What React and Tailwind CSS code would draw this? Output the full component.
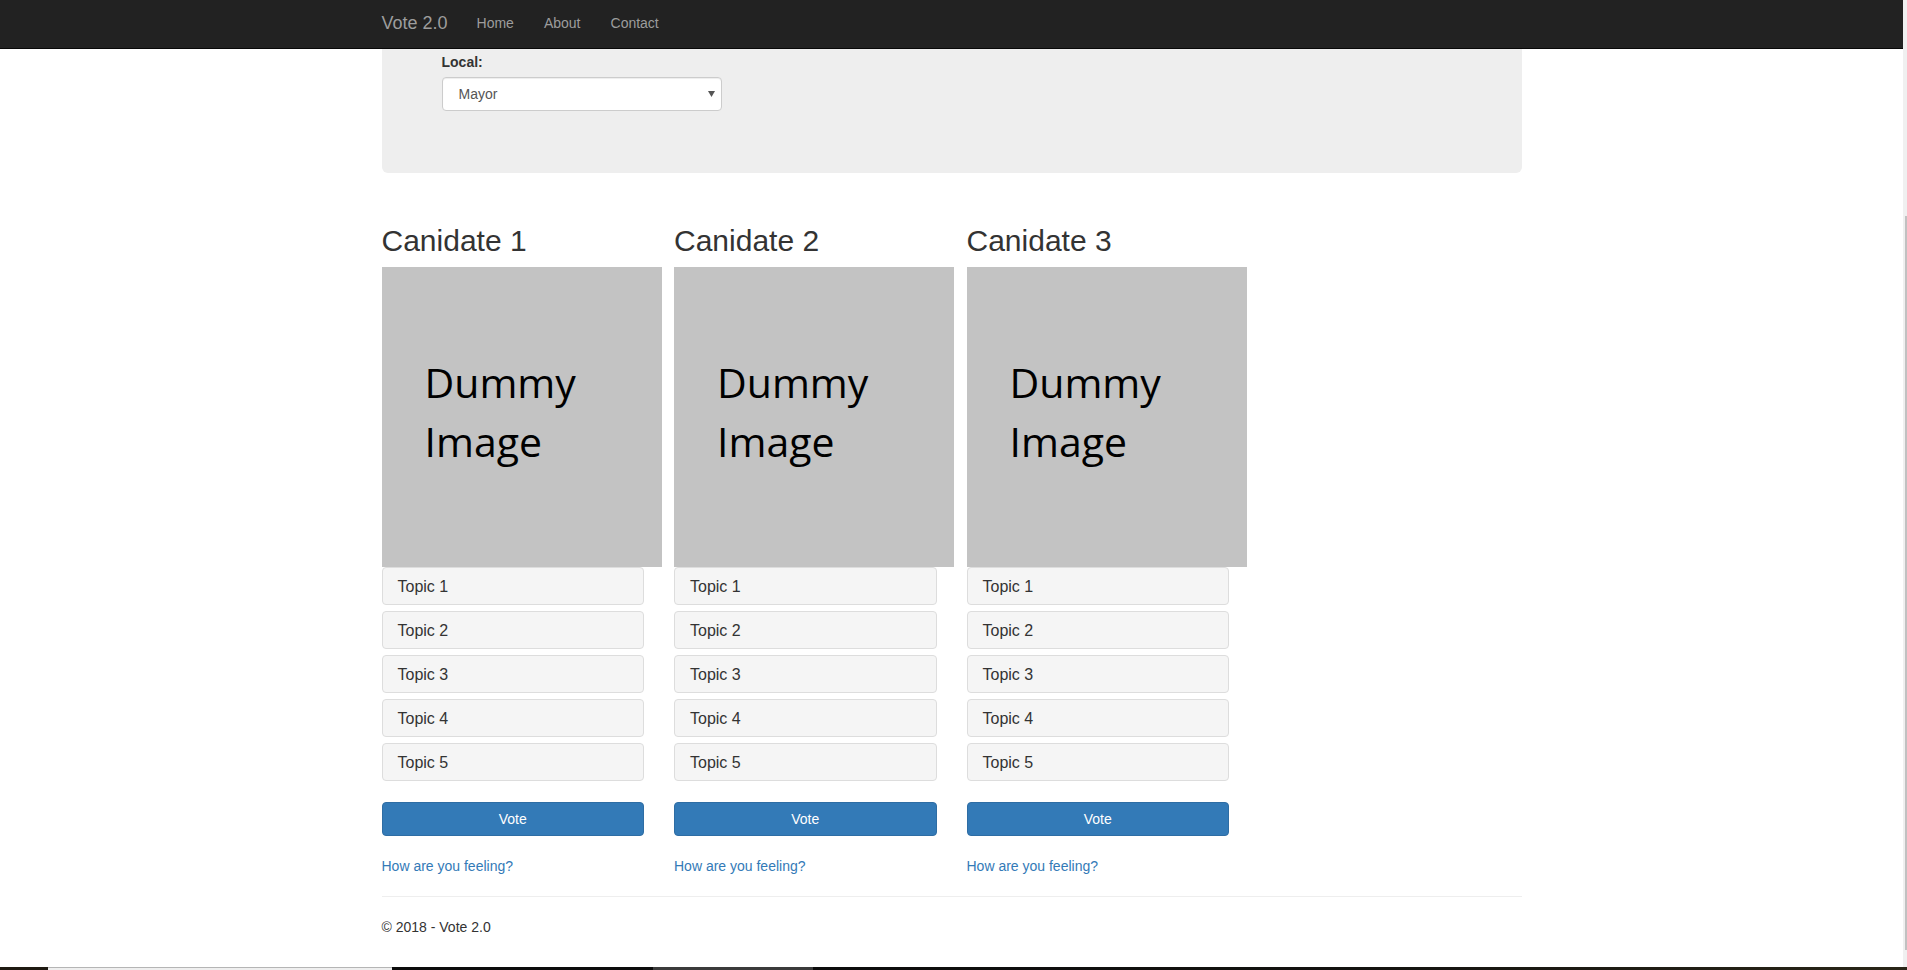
import React from "react";

const candidates = [1, 2, 3];
const topics = [1, 2, 3, 4, 5];

function Column({ n }) {
  return (
    <div className="w-[262.5px] shrink-0 flex flex-col">
      <h2 className="text-[30px] leading-[33px] text-[#333] font-normal">Canidate {n}</h2>
      <div
        className="mt-[10px] w-[280px] h-[300px] shrink-0 bg-[#c3c3c3] pt-[86px] pl-[43px] text-black text-[41px] leading-[59px]"
        style={{ fontFamily: '"Open Sans", sans-serif' }}
      >
        <div>Dummy</div>
        <div>Image</div>
      </div>
      <div className="flex flex-col gap-[6px]">
        {topics.map((t) => (
          <div
            key={t}
            className="h-[38px] flex items-center px-[15px] pt-[2px] bg-[#f5f5f5] border border-[#ddd] rounded-[4px] text-[16px] text-[#333]"
          >
            Topic {t}
          </div>
        ))}
      </div>
      <button className="mt-[21px] h-[34px] w-full bg-[#337ab7] border border-[#2e6da4] rounded-[4px] text-white text-[14px]">
        Vote
      </button>
      <a className="mt-[20px] text-[14px] leading-[20px] text-[#337ab7]">How are you feeling?</a>
    </div>
  );
}

export default function App() {
  return (
    <div
      className="w-[1907px] h-[970px] flex flex-col overflow-hidden bg-white"
      style={{ fontFamily: '"Liberation Sans", Arial, sans-serif' }}
    >
      <div className="h-[967px] flex flex-row">
        <div className="flex-1 flex flex-col">
          {/* Navbar */}
          <div className="h-[49px] shrink-0 bg-[#222] border-b border-[#080808] flex justify-center">
            <div className="w-[1140px] flex items-center h-[46px]">
              <span className="text-[18px] text-[#9d9d9d]">Vote 2.0</span>
              <span className="ml-[29px] text-[14px] text-[#9d9d9d]">Home</span>
              <span className="ml-[30px] text-[14px] text-[#9d9d9d]">About</span>
              <span className="ml-[30px] text-[14px] text-[#9d9d9d]">Contact</span>
            </div>
          </div>
          {/* Content */}
          <div className="flex justify-center">
            <div className="w-[1140px] flex flex-col">
              <div className="h-[124px] bg-[#eee] rounded-b-[6px] pl-[60px] pt-[3px]">
                <div className="text-[14px] leading-[20px] font-bold text-[#333]">Local:</div>
                <div className="mt-[5px] w-[280px] h-[34px] bg-white border border-[#ccc] rounded-[4px] shadow-[inset_0_1px_1px_rgba(0,0,0,0.075)] flex items-center justify-between pl-[16px] pr-[6px]">
                  <span className="text-[14px] text-[#555]">Mayor</span>
                  <svg width="7" height="6" viewBox="0 0 7 6">
                    <path d="M0 0 L7 0 L3.5 6 Z" fill="#555" />
                  </svg>
                </div>
              </div>
              <div className="mt-[51px] flex flex-row gap-[30px]">
                {candidates.map((n) => (
                  <Column key={n} n={n} />
                ))}
              </div>
              <div className="mt-[20px] border-t border-[#eee]" />
              <div className="mt-[20px] text-[14px] leading-[20px] text-[#333]">© 2018 - Vote 2.0</div>
            </div>
          </div>
        </div>
        {/* Scrollbar */}
        <div className="w-[4px] bg-[#f0f0f0] flex flex-col">
          <div className="h-[216px]" />
          <div className="h-[734px] ml-[2px] bg-[#c1c1c1]" />
        </div>
      </div>
      {/* Bottom strip */}
      <div className="h-[3px] flex flex-row">
        <div className="w-[48px] bg-[#1f1a12]" />
        <div className="w-[344px] bg-[#efefef] border-t border-[#b5b5b5]" />
        <div className="w-[261px] bg-[#0c0c0c]" />
        <div className="w-[160px] bg-[#3b3b3b]" />
        <div className="flex-1 bg-gradient-to-r from-[#0c0c0c] via-[#141310] to-[#2a2618]" />
      </div>
    </div>
  );
}
